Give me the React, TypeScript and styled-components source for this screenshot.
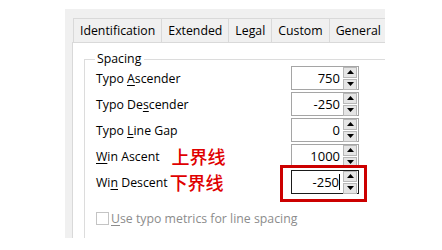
import React from 'react';
import styled, { createGlobalStyle } from 'styled-components';

const GlobalStyle = createGlobalStyle`
  html, body {
    margin: 0;
    padding: 0;
    background: #ffffff;
  }
  body {
    font-family: "Open Sans", "Noto Sans", sans-serif;
    font-size: 12.3px;
    color: #000;
  }
`;

const Page = styled.div`
  width: 442px;
  height: 250px;
  padding: 9px 0 0 65px;
  box-sizing: border-box;
`;

const Window = styled.div`
  width: 320px;
  height: 229px;
  background: #f0f0f0;
  overflow: hidden;
  display: flex;
  flex-direction: column;
  position: relative;
`;

const TabBar = styled.div`
  display: flex;
  padding: 9px 0 0 8px;
  height: 24px;
  flex-shrink: 0;
`;

const Tab = styled.div`
  padding: 0 6px 0 6px;
  height: 24px;
  line-height: 23px;
  background: #f0f0f0;
  border: 1px solid #d9d9d9;
  border-bottom: none;
  margin-right: -1px;
  white-space: nowrap;
  box-sizing: border-box;
`;

const Panel = styled.div`
  flex: 1;
  margin-left: 7px;
  background: #ffffff;
  border-left: 1px solid #d9d9d9;
  border-top: 1px solid #d9d9d9;
  padding: 9px 0 0 11px;
  position: relative;
`;

const GroupBox = styled.fieldset`
  margin: 0;
  border: 1px solid #dcdcdc;
  border-right: none;
  border-radius: 0;
  padding: 0 0 40px 11px;
  width: 320px;
  box-sizing: border-box;
`;

const Legend = styled.legend`
  padding: 0 3px 0 2px;
  margin-left: -1px;
  line-height: 14px;
`;

const Rows = styled.div`
  display: flex;
  flex-direction: column;
  gap: 2px;
`;

const Row = styled.div`
  display: flex;
  align-items: center;
  height: 24px;
`;

const Label = styled.div`
  width: 195px;
  display: flex;
  align-items: center;
  white-space: pre;
`;

const Mnemonic = styled.span`
  text-decoration: underline;
  text-underline-offset: 2px;
`;

// red annotation written over the dialog
const Note = styled.span<{ $gap: number }>`
  margin-left: ${p => p.$gap}px;
  color: #e00000;
  font-family: "Noto Sans CJK SC", sans-serif;
  font-size: 18px;
  font-weight: 500;
  line-height: 20px;
`;

const SpinBox = styled.div<{ $focused?: boolean }>`
  width: 68px;
  height: 24px;
  box-sizing: border-box;
  border: 1px solid ${p => (p.$focused ? '#1a1a1a' : '#a5a5a5')};
  background: #fff;
  display: flex;
  align-items: center;
  padding: 0 1px 0 0;
`;

const Value = styled.div`
  flex: 1;
  padding-right: 3px;
  font-size: 13px;
  display: flex;
  justify-content: flex-end;
  align-items: center;
`;

const Caret = styled.span`
  display: inline-block;
  width: 1px;
  height: 16px;
  background: #000;
`;

const Buttons = styled.div`
  display: flex;
  flex-direction: column;
  gap: 1px;
  width: 14px;
`;

const SpinButton = styled.div`
  height: 11px;
  background: #e5e5e5;
  border: 1px solid #b8b8b8;
  box-sizing: border-box;
  display: flex;
  align-items: center;
  justify-content: center;
`;

const Highlight = styled.div`
  position: absolute;
  left: 207px;
  top: 122px;
  width: 87px;
  height: 37px;
  border: 3px solid #cc0000;
  box-sizing: border-box;
  pointer-events: none;
`;

const CheckRow = styled.div`
  display: flex;
  align-items: center;
  margin-top: 16px;
  color: #8c8c8c;
  white-space: pre;
`;

const CheckBox = styled.div`
  width: 13px;
  height: 13px;
  border: 1px solid #c4c4c4;
  box-sizing: border-box;
  margin-right: 2px;
  background: #fff;
`;

const Arrow = ({ up }: { up?: boolean }) => (
  <svg width="7" height="4" viewBox="0 0 7 4">
    {up ? <path d="M0 4 L3.5 0 L7 4 Z" fill="#000" /> : <path d="M0 0 L3.5 4 L7 0 Z" fill="#000" />}
  </svg>
);

const Spin = ({ value, focused }: { value: string; focused?: boolean }) => (
  <SpinBox $focused={focused}>
    <Value>
      {value}
      {focused && <Caret />}
    </Value>
    <Buttons>
      <SpinButton><Arrow up /></SpinButton>
      <SpinButton><Arrow /></SpinButton>
    </Buttons>
  </SpinBox>
);

const tabs = ['Identification', 'Extended', 'Legal', 'Custom', 'General'];

export default function App() {
  return (
    <Page>
      <GlobalStyle />
      <Window>
        <TabBar>
          {tabs.map(t => (
            <Tab key={t}>{t}</Tab>
          ))}
        </TabBar>
        <Panel>
          <GroupBox>
            <Legend>Spacing</Legend>
            <Rows>
              <Row>
                <Label><span>Typo <Mnemonic>A</Mnemonic>scender</span></Label>
                <Spin value="750" />
              </Row>
              <Row>
                <Label><span>Typo De<Mnemonic>s</Mnemonic>cender</span></Label>
                <Spin value="-250" />
              </Row>
              <Row>
                <Label><span>Typo <Mnemonic>L</Mnemonic>ine Gap</span></Label>
                <Spin value="0" />
              </Row>
              <Row>
                <Label>
                  <span><Mnemonic>W</Mnemonic>in Ascent</span>
                  <Note $gap={12}>上界线</Note>
                </Label>
                <Spin value="1000" />
              </Row>
              <Row>
                <Label>
                  <span>Wi<Mnemonic>n</Mnemonic> Descent</span>
                  <Note $gap={2}>下界线</Note>
                </Label>
                <Spin value="-250" focused />
              </Row>
            </Rows>
            <CheckRow>
              <CheckBox />
              <span><Mnemonic>U</Mnemonic>se typo metrics for line spacing</span>
            </CheckRow>
          </GroupBox>
          <Highlight />
        </Panel>
      </Window>
    </Page>
  );
}
